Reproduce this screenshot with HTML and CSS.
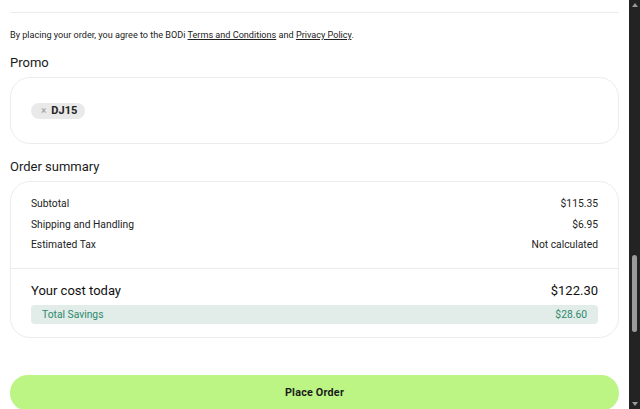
FILE: index.html
```html
<!DOCTYPE html>
<html lang="en">
<head>
<meta charset="utf-8">
<title>Checkout</title>
<link rel="stylesheet" href="styles.css">
</head>
<body>
<div class="shell">
  <main class="page">
    <hr class="rule">
    <p class="legal">By placing your order, you agree to the BODi <a href="#">Terms and Conditions</a> and <a href="#">Privacy Policy</a>.</p>

    <h2 class="section-title">Promo</h2>
    <section class="card promo-card">
      <span class="chip"><span class="chip-x">×</span><span class="chip-code">DJ15</span></span>
    </section>

    <h2 class="section-title">Order summary</h2>
    <section class="card summary-card">
      <div class="lines">
        <div class="line"><span>Subtotal</span><span>$115.35</span></div>
        <div class="line"><span>Shipping and Handling</span><span>$6.95</span></div>
        <div class="line"><span>Estimated Tax</span><span>Not calculated</span></div>
      </div>
      <div class="totals">
        <div class="total"><span>Your cost today</span><span>$122.30</span></div>
        <div class="savings"><span>Total Savings</span><span>$28.60</span></div>
      </div>
    </section>

    <button class="place-order" type="button">Place Order</button>
  </main>
  <div class="scrollbar" aria-hidden="true">
    <span class="arrow up"></span>
    <span class="track-gap top-gap"></span>
    <span class="thumb"></span>
    <span class="track-gap"></span>
    <span class="arrow down"></span>
  </div>
</div>
</body>
</html>
```

FILE: styles.css
```css
html, body {
  margin: 0;
  padding: 0;
  height: 100%;
  overflow: hidden;
  background: #ffffff;
}

body {
  font-family: Roboto, "Liberation Sans", Arial, sans-serif;
  color: #1c1c1c;
}

.shell {
  display: flex;
  height: 409px;
}

.page {
  flex: 1;
  padding: 12px 10px 0 10px;
  min-width: 0;
}

.rule {
  margin: 0;
  border: 0;
  border-top: 1px solid #ececec;
}

.legal {
  margin: 15px 0 0 0;
  font-size: 9.1px;
  line-height: 14px;
  color: #222;
}

.legal a {
  color: #222;
  text-decoration: underline;
  text-underline-offset: 1px;
}

.section-title {
  margin: 12px 0 0 0;
  font-size: 13px;
  line-height: 18px;
  font-weight: 400;
  color: #1a1a1a;
}

.card {
  border: 1px solid #ececec;
  border-radius: 20px;
  background: #fff;
}

.promo-card {
  margin-top: 5px;
  margin-bottom: 0;
  padding: 25px 20px;
  height: 15px;
  display: flex;
  align-items: center;
}

.promo-card + .section-title {
  margin-top: 14px;
}

.chip {
  display: inline-flex;
  align-items: center;
  gap: 5px;
  height: 16px;
  padding: 0 8px 0 10px;
  border-radius: 8px;
  background: #e9e9e9;
  font-size: 11px;
}

.chip-x {
  color: #9a9a9a;
  font-size: 10px;
}

.chip-code {
  font-weight: 700;
  color: #222;
}

.summary-card {
  margin-top: 5px;
}

.lines {
  padding: 12px 20px 12px 20px;
  border-bottom: 1px solid #ececec;
}

.line {
  display: flex;
  justify-content: space-between;
  font-size: 10.3px;
  line-height: 20.5px;
  color: #222;
}

.totals {
  padding: 12px 20px 13px 20px;
}

.total {
  display: flex;
  justify-content: space-between;
  font-size: 13px;
  line-height: 20px;
  color: #111;
}

.savings {
  margin-top: 4px;
  display: flex;
  justify-content: space-between;
  align-items: center;
  height: 19px;
  padding: 0 11px;
  border-radius: 4px;
  background: #e2ece8;
  color: #2c8a6c;
  font-size: 10.3px;
}

.place-order {
  display: block;
  width: 100%;
  margin-top: 37px;
  height: 36px;
  border: 0;
  border-radius: 18px;
  background: #bcf584;
  font-family: Roboto, "Liberation Sans", Arial, sans-serif;
  font-size: 10.8px;
  font-weight: 700;
  letter-spacing: 0.2px;
  color: #1b1b1b;
  padding: 0;
}

.scrollbar {
  width: 11px;
  flex: none;
  background: #232323;
  display: flex;
  flex-direction: column;
  align-items: center;
}

.arrow {
  width: 0;
  height: 0;
  border-left: 3px solid transparent;
  border-right: 3px solid transparent;
  margin: 3px 0;
}

.arrow.up {
  border-bottom: 4px solid #9a9a9a;
}

.arrow.down {
  border-top: 4px solid #9a9a9a;
}

.track-gap {
  flex: 1;
}

.top-gap {
  flex: none;
  height: 245px;
}

.thumb {
  width: 5px;
  height: 77px;
  border-radius: 3px;
  background: #9b9b9b;
}
```
